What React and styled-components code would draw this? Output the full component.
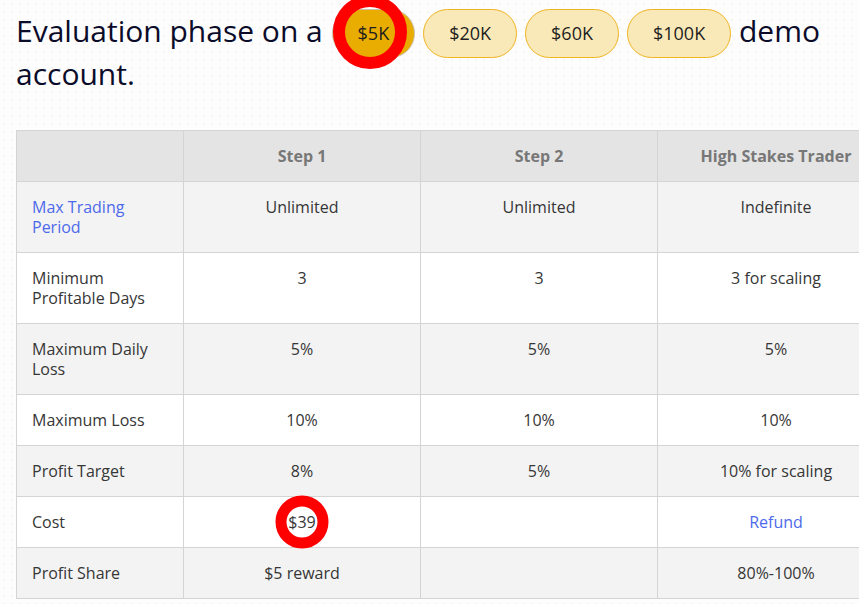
import React from "react";
import styled, { createGlobalStyle } from "styled-components";

const GlobalStyle = createGlobalStyle`
  html, body {
    margin: 0;
    overflow: hidden;
  }
  body {
    font-family: "Open Sans", "Liberation Sans", sans-serif;
    background-color: #fdfdfd;
    background-image: radial-gradient(#f5f5f5 1px, transparent 1.2px);
    background-size: 8px 8px;
  }
`;

const Page = styled.div`
  padding: 9px 0 0 16px;
  width: 900px;
`;

const Heading = styled.h2`
  margin: 0;
  width: 843px;
  font-size: 30px;
  font-weight: 400;
  line-height: 43px;
  color: #0b0b2a;
`;

const SizeButton = styled.span`
  position: relative;
  display: inline-block;
  vertical-align: middle;
  margin: -8px 0 -8px 8px;
  padding: 0 25px;
  height: 49px;
  line-height: 47px;
  box-sizing: border-box;
  border-radius: 25px;
  font-size: 18px;
  color: #1e1e1e;
  background: ${({ active }) => (active ? "#e9ac00" : "#fae9b8")};
  border: 1px solid ${({ active }) => (active ? "#c9c2b0" : "#efb420")};
  &:first-of-type {
    margin-left: 1px;
  }
`;

const Ring = styled.span`
  position: absolute;
  left: calc(50% + ${({ dx }) => dx || 0}px);
  top: calc(50% + ${({ dy }) => dy || 0}px);
  width: ${({ size }) => size}px;
  height: ${({ size }) => size}px;
  transform: translate(-50%, -50%);
  box-sizing: border-box;
  border: ${({ thick }) => thick}px solid #ff0000;
  border-radius: 50%;
  pointer-events: none;
`;

const Marked = styled.span`
  position: relative;
  display: inline-block;
`;

const Table = styled.table`
  margin-top: 35px;
  border-collapse: collapse;
  table-layout: fixed;
  width: 878px;
  font-size: 16px;
  line-height: 20px;
  color: #363636;
`;

const HeadCell = styled.th`
  padding: 15px;
  background: #e4e4e4;
  border: 1px solid #d4d4d4;
  color: #777777;
  font-weight: 700;
  text-align: center;
`;

const Row = styled.tr`
  background: ${({ shade }) => (shade ? "#f3f3f3" : "#ffffff")};
`;

const Cell = styled.td`
  padding: 15px;
  border: 1px solid #d4d4d4;
  vertical-align: top;
  text-align: ${({ label }) => (label ? "left" : "center")};
  height: ${({ tall }) => (tall ? "40px" : "20px")};
`;

const Link = styled.span`
  color: #4d6aea;
`;

const sizes = ["$5K", "$20K", "$60K", "$100K"];

const rows = [
  { label: <Link>Max Trading Period</Link>, values: ["Unlimited", "Unlimited", "Indefinite"], tall: true },
  { label: "Minimum Profitable Days", values: ["3", "3", "3 for scaling"], tall: true },
  { label: "Maximum Daily Loss", values: ["5%", "5%", "5%"], tall: true },
  { label: "Maximum Loss", values: ["10%", "10%", "10%"] },
  { label: "Profit Target", values: ["8%", "5%", "10% for scaling"] },
  {
    label: "Cost",
    values: [
      <Marked key="c">
        $39
        <Ring size={53} thick={11} />
      </Marked>,
      "",
      <Link key="r">Refund</Link>,
    ],
  },
  { label: "Profit Share", values: ["$5 reward", "", "80%-100%"] },
];

const App = () => {
  return (
    <>
      <GlobalStyle />
      <Page>
        <Heading>
          Evaluation phase on a{" "}
          {sizes.map((s, i) => (
            <SizeButton key={s} active={i === 0}>
              {s}
              {i === 0 && <Ring size={74} thick={12} dx={-3} dy={-2} />}
            </SizeButton>
          ))}
          {" "}demo account.
        </Heading>
        <Table>
          <colgroup>
            <col style={{ width: 167 }} />
            <col style={{ width: 237 }} />
            <col style={{ width: 237 }} />
            <col style={{ width: 237 }} />
          </colgroup>
          <thead>
            <tr>
              <HeadCell />
              <HeadCell>Step 1</HeadCell>
              <HeadCell>Step 2</HeadCell>
              <HeadCell>High Stakes Trader</HeadCell>
            </tr>
          </thead>
          <tbody>
            {rows.map((r, i) => (
              <Row key={i} shade={i % 2 === 0}>
                <Cell label tall={r.tall}>{r.label}</Cell>
                {r.values.map((v, j) => (
                  <Cell key={j} tall={r.tall}>{v}</Cell>
                ))}
              </Row>
            ))}
          </tbody>
        </Table>
      </Page>
    </>
  );
};

export default App;
